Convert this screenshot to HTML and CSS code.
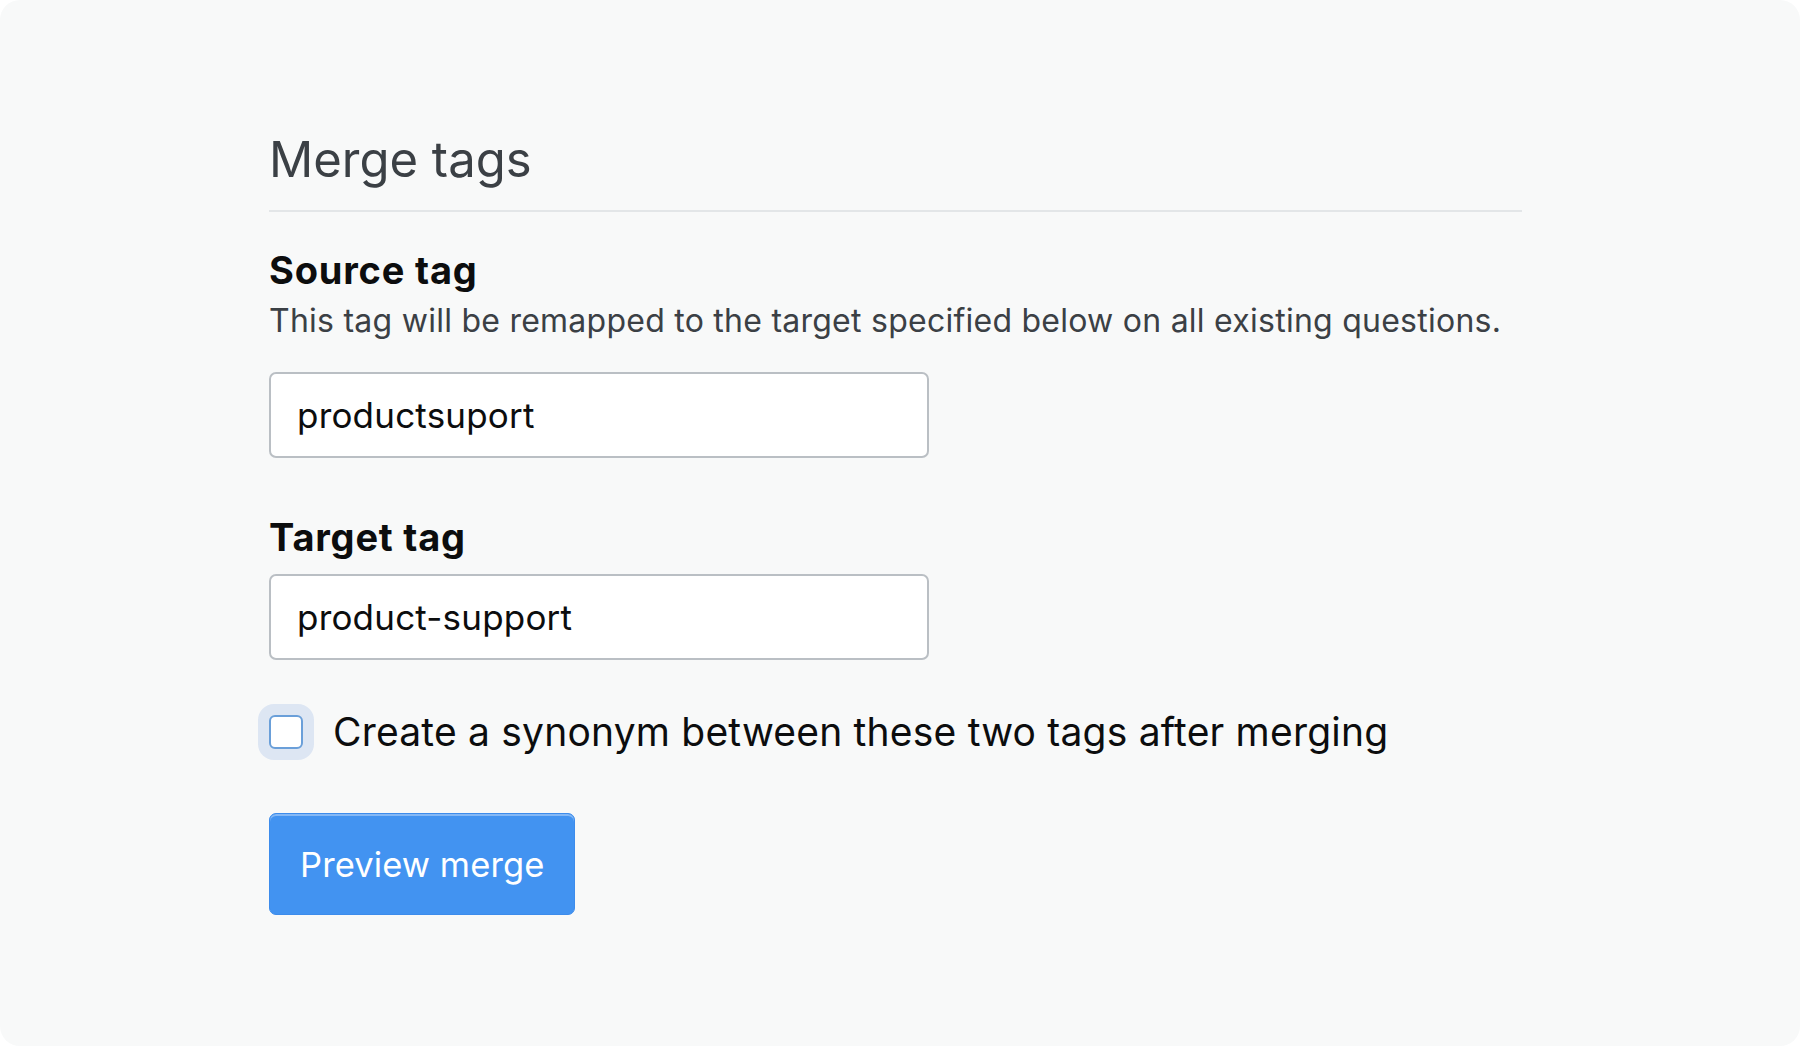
FILE: index.html
```html
<!DOCTYPE html>
<html lang="en">
<head>
<meta charset="utf-8">
<title>Merge tags</title>
<link rel="stylesheet" href="styles.css">
</head>
<body>
<div class="card">
  <div class="content">
    <h1 class="title">Merge tags</h1>
    <div class="field">
      <label class="label" for="source">Source tag</label>
      <p class="desc">This tag will be remapped to the target specified below on all existing questions.</p>
      <input class="input" id="source" type="text" value="productsuport">
    </div>
    <div class="field field-target">
      <label class="label" for="target">Target tag</label>
      <input class="input" id="target" type="text" value="product-support">
    </div>
    <label class="check-row">
      <span class="check-box"></span>
      <span class="check-text">Create a synonym between these two tags after merging</span>
    </label>
    <button class="btn" type="button">Preview merge</button>
  </div>
</div>
</body>
</html>
```

FILE: styles.css
```css
html, body {
  margin: 0;
  padding: 0;
  background: #ffffff;
}

body {
  font-family: Inter, "Liberation Sans", Arial, sans-serif;
  color: #0c0d0e;
}

.card {
  height: 1046px;
  background: #f8f9f9;
  border-radius: 20px;
  overflow: hidden;
}

.content {
  width: 1253px;
  padding: 130px 0 0 269px;
  display: flex;
  flex-direction: column;
  align-items: flex-start;
}

.title {
  align-self: stretch;
  margin: 0;
  font-size: 49px;
  line-height: 60px;
  font-weight: 400;
  color: #3b4045;
  padding-bottom: 20px;
  border-bottom: 2px solid #e3e6e8;
}

.field {
  margin-top: 36px;
  display: flex;
  flex-direction: column;
  align-items: flex-start;
}

.field-target {
  margin-top: 57px;
}

.label {
  display: block;
  font-size: 38px;
  line-height: 44px;
  font-weight: 700;
  letter-spacing: 0.8px;
  color: #0c0d0e;
}

.desc {
  margin: 9px 0 0;
  font-size: 32px;
  line-height: 40px;
  letter-spacing: 0.25px;
  color: #3b4045;
}

.input {
  box-sizing: border-box;
  width: 660px;
  height: 86px;
  margin-top: 31px;
  padding: 0 26px;
  border: 2px solid #babfc4;
  border-radius: 7px;
  background: #ffffff;
  font-family: Inter, "Liberation Sans", Arial, sans-serif;
  font-size: 35px;
  letter-spacing: 0.2px;
  color: #0c0d0e;
  outline: none;
}

.field-target .input {
  margin-top: 15px;
}

.check-row {
  margin-top: 48px;
  display: flex;
  align-items: center;
  gap: 30px;
  height: 48px;
}

.check-box {
  box-sizing: border-box;
  width: 34px;
  height: 34px;
  border: 2px solid #6a9fd9;
  border-radius: 6px;
  background: #ffffff;
  box-shadow: 0 0 0 11px #dde6f3;
}

.check-text {
  font-size: 39px;
  line-height: 48px;
  letter-spacing: 0.2px;
  color: #0c0d0e;
}

.btn {
  margin-top: 57px;
  box-sizing: border-box;
  height: 102px;
  padding: 0 30px;
  border: 1px solid #3d8cec;
  border-radius: 7px;
  background: #4293f1;
  box-shadow: inset 0 2px 0 rgba(255, 255, 255, 0.35);
  font-family: Inter, "Liberation Sans", Arial, sans-serif;
  font-size: 34.5px;
  letter-spacing: 0.1px;
  color: #ffffff;
  cursor: pointer;
}
```
